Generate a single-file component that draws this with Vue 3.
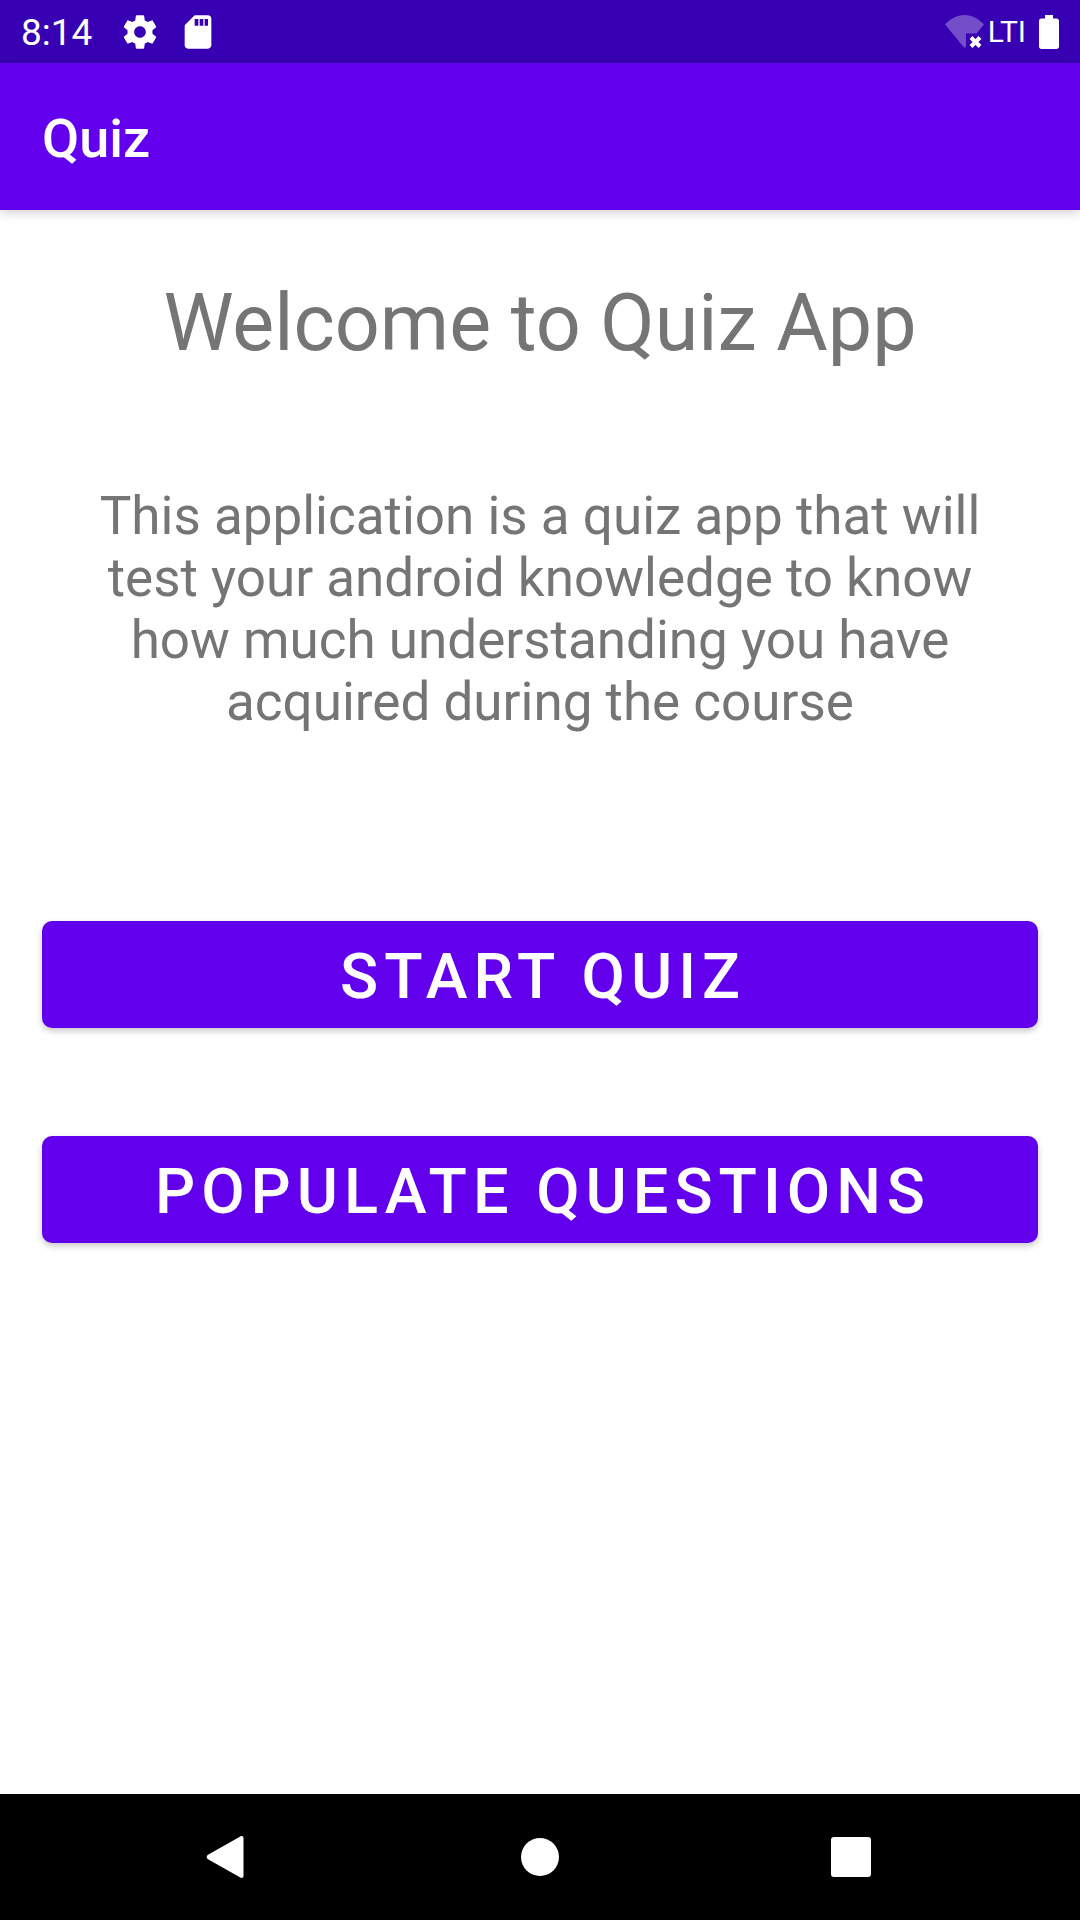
<script setup>
const actions = ['Start quiz', 'Populate questions']
</script>

<template>
  <div class="screen">
    <div class="status-bar">
      <time class="clock">8:14</time>
      <svg class="status-icon settings" viewBox="0 0 24 24" aria-hidden="true">
        <path d="M19.43 12.98c.04-.32.07-.64.07-.98s-.03-.66-.07-.98l2.11-1.65c.19-.15.24-.42.12-.64l-2-3.46c-.12-.22-.39-.3-.61-.22l-2.49 1c-.52-.4-1.08-.73-1.69-.98l-.38-2.65C14.46 2.18 14.25 2 14 2h-4c-.25 0-.46.18-.49.42l-.38 2.65c-.61.25-1.17.59-1.69.98l-2.49-1c-.23-.09-.49 0-.61.22l-2 3.46c-.13.22-.07.49.12.64l2.11 1.65c-.04.32-.07.65-.07.98s.03.66.07.98l-2.11 1.65c-.19.15-.24.42-.12.64l2 3.46c.12.22.39.3.61.22l2.49-1c.52.4 1.08.73 1.69.98l.38 2.65c.03.24.24.42.49.42h4c.25 0 .46-.18.49-.42l.38-2.65c.61-.25 1.17-.59 1.69-.98l2.49 1c.23.09.49 0 .61-.22l2-3.46c.12-.22.07-.49-.12-.64l-2.11-1.65zM12 15.500c-1.930 0-3.500-1.570-3.500-3.500s1.570-3.500 3.500-3.500 3.500 1.570 3.500 3.500-1.570 3.500-3.500 3.500z" />
      </svg>
      <svg class="status-icon" viewBox="0 0 24 24" aria-hidden="true">
        <path d="M18 2h-8L4.020 8 4 20c0 1.100.9 2 2 2h12c1.100 0 2-.9 2-2V4c0-1.100-.9-2-2-2zm-5.800 6.200h-2.200V4.200h2.200v4zm3 0h-2.200V4.200h2.200v4zm2.800 0h-2V4.200h2v4z" />
      </svg>
      <svg class="wifi" viewBox="0 0 40 34" aria-hidden="true">
        <path opacity=".3" d="M0 9.500C5 4 12 0 19.500 0S34 4 39 9.500L31.500 18.500H21V31l-1.500 2z" />
        <path class="cross" d="M26 22.500l9 9M35 22.500l-9 9" />
      </svg>
      <span class="network">LTI</span>
      <svg class="battery" viewBox="0 0 20 34" aria-hidden="true">
        <path d="M6 0h8v3.500h3.500C19 3.500 20 4.500 20 6v25.500c0 1.500-1 2.500-2.500 2.500h-15C1 34 0 33 0 31.500V6c0-1.500 1-2.500 2.500-2.500H6z" />
      </svg>
    </div>

    <header class="app-bar">
      <h1>Quiz</h1>
    </header>

    <main>
      <h2>Welcome to Quiz App</h2>
      <p>
        This application is a quiz app that will test your android knowledge to know how much
        understanding you have acquired during the course
      </p>
      <div class="actions">
        <button v-for="action in actions" :key="action" type="button">{{ action }}</button>
      </div>
    </main>

    <nav>
      <button type="button" aria-label="Back">
        <svg viewBox="0 0 48 48"><path d="M42.500 5v38c0 1.800-1.700 2.500-3.200 1.600L7 26.200c-1.800-1.200-1.800-3.200 0-4.400l32.300-18.400c1.500-.9 3.200-.2 3.200 1.600z" /></svg>
      </button>
      <button type="button" aria-label="Home">
        <svg viewBox="0 0 48 48"><circle cx="24" cy="24" r="19" /></svg>
      </button>
      <button type="button" aria-label="Recent apps">
        <svg viewBox="0 0 48 48"><rect x="0" y="4" width="40" height="40" rx="3" /></svg>
      </button>
    </nav>
  </div>
</template>

<style>
body {
  margin: 0;
}
</style>

<style scoped>
.screen {
  display: flex;
  flex-direction: column;
  min-height: 100vh;
  background: #fff;
  color: #757575;
  font-family: Roboto, sans-serif;
}

svg {
  flex: none;
  fill: currentColor;
}

.status-bar {
  display: flex;
  align-items: center;
  height: 63px;
  padding: 0 21px;
  background: #3700b3;
  color: #fff;
}

.clock {
  padding-top: 2px;
  font-size: 37px;
  line-height: 44px;
}

.status-icon {
  width: 40px;
  height: 40px;
}

.settings {
  margin: 0 18px 0 28px;
}

.wifi {
  width: 40px;
  height: 34px;
  margin-left: auto;
}

.cross {
  fill: none;
  stroke: currentColor;
  stroke-width: 4;
}

.network {
  margin: 0 13px 0 3px;
  font-size: 30px;
  line-height: 32px;
}

.battery {
  width: 20px;
  height: 34px;
}

.app-bar {
  display: flex;
  align-items: center;
  height: 147px;
  padding: 0 42px;
  background: #6200ee;
  box-shadow: 0 3px 10px rgba(0, 0, 0, 0.18);
  color: #fff;
}

h1 {
  margin: 0;
  padding-top: 4px;
  font-size: 54px;
  font-weight: 500;
  line-height: 62px;
}

main {
  flex: 1;
  padding: 67px 42px;
  text-align: center;
}

h2 {
  margin: 0;
  font-size: 79px;
  font-weight: 400;
  line-height: 92px;
}

p {
  margin: 116px 42px 0;
  font-size: 53px;
  line-height: 62px;
}

.actions {
  display: flex;
  flex-direction: column;
  gap: 108px;
  margin-top: 188px;
}

.actions button {
  height: 107px;
  padding: 4px 0 0 6px;
  border: 0;
  border-radius: 10px;
  background: #6200ee;
  box-shadow: 0 3px 6px rgba(0, 0, 0, 0.22);
  color: #fff;
  font-family: inherit;
  font-size: 63px;
  font-weight: 500;
  letter-spacing: 6px;
  line-height: 74px;
  text-transform: uppercase;
}

nav {
  display: flex;
  justify-content: center;
  gap: 189px;
  background: #000;
}

nav button {
  display: flex;
  align-items: center;
  justify-content: center;
  width: 126px;
  height: 126px;
  padding: 0;
  border: 0;
  background: none;
  color: #fff;
}

nav svg {
  width: 48px;
  height: 48px;
}
</style>
